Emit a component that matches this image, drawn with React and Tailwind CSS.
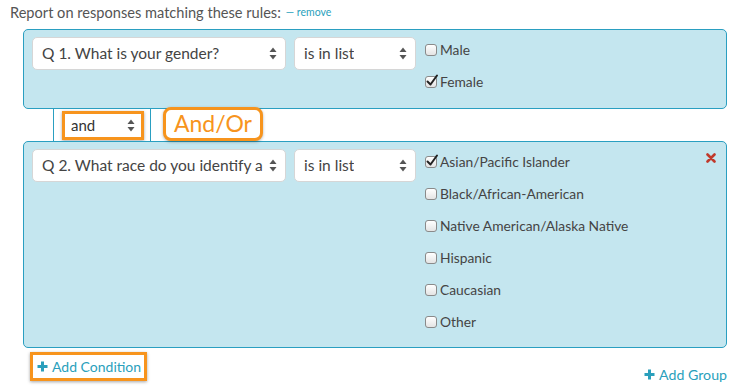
import React from "react";

const font = { fontFamily: '"Lato", "Open Sans", "Liberation Sans", sans-serif' };

function Arrows() {
  return (
    <svg width="8" height="13" viewBox="0 0 8 13" className="shrink-0">
      <path d="M4 0.5 L7.5 5 L0.5 5 Z" fill="#555" />
      <path d="M4 12.5 L7.5 8 L0.5 8 Z" fill="#555" />
    </svg>
  );
}

function Plus() {
  return (
    <svg width="11" height="11" viewBox="0 0 11 11" className="mr-[4px] shrink-0">
      <path d="M5.5 0.5 V10.5 M0.5 5.5 H10.5" stroke="#2a9fbc" strokeWidth="3" />
    </svg>
  );
}

function Select({ text, w, className = "" }) {
  return (
    <div
      className={`flex h-[33px] items-center justify-between rounded-[5px] border border-[#d6d6d6] bg-white pl-[9px] pr-[8px] text-[15.5px] text-[#444] ${className}`}
      style={{ width: w }}
    >
      <span className="mr-[6px] overflow-hidden whitespace-nowrap">{text}</span>
      <Arrows />
    </div>
  );
}

function Check({ checked, label }) {
  return (
    <div className="flex h-[32px] items-start">
      <div className="relative mt-[4px] h-[12px] w-[12px] shrink-0 rounded-[3px] border border-[#8a8a8a] bg-gradient-to-b from-white to-[#e4e4e4]">
        {checked && (
          <svg width="14" height="14" viewBox="0 0 14 14" className="absolute -left-[1px] -top-[3px]">
            <path d="M2.5 7.5 L5.5 10.5 L12 1.5" stroke="#222" strokeWidth="2" fill="none" strokeLinecap="round" strokeLinejoin="round" />
          </svg>
        )}
      </div>
      <span className="ml-[3px] text-[13.8px] leading-[20px] text-[#444]">{label}</span>
    </div>
  );
}

export default function App() {
  return (
    <div className="relative h-[391px] w-[737px] overflow-hidden bg-white" style={font}>
      <div className="flex h-[29px] items-center pl-[10px] pb-[3px]">
        <span className="text-[14.6px] text-[#555]">Report on responses matching these rules:</span>
        <span className="ml-[5px] text-[10.5px] text-[#2a9fbc]">— remove</span>
      </div>

      <div className="ml-[23px] w-[704px]">
        <div className="flex h-[80px] gap-[8px] rounded-[5px] border border-[#2a9fc1] bg-[#c4e6ef] pl-[8px] pt-[7px]">
          <Select text="Q 1. What is your gender?" w={254} />
          <Select text="is in list" w={122} />
          <div className="ml-[1px] flex flex-col pt-[3px]">
            <Check label="Male" />
            <Check checked label="Female" />
          </div>
        </div>

        <div className="flex h-[32px] items-center">
          <div className="ml-[30px] flex h-full w-[98px] items-center border-x border-[#2a9fc1] bg-white pl-[8px]">
            <div className="flex h-[29px] w-[82px] items-center justify-between border-[3px] border-[#f7941d] bg-white pl-[6px] pr-[6px] text-[15px] text-[#333] shadow-[0_1px_3px_rgba(0,0,0,0.35)]">
              <span>and</span>
              <Arrows />
            </div>
          </div>
          <div className="relative z-10 ml-[12px] -mt-[3px] flex h-[34px] w-[100px] items-center justify-center rounded-[8px] border-[3px] border-[#f7941d] bg-white text-[23px] text-[#f7941d] shadow-[0_1px_3px_rgba(0,0,0,0.3)]">
            And/Or
          </div>
        </div>

        <div className="relative flex h-[207px] gap-[8px] rounded-[5px] border border-[#2a9fc1] bg-[#c4e6ef] pl-[8px] pt-[7px]">
          <Select text="Q 2. What race do you identify as?" w={254} />
          <Select text="is in list" w={122} />
          <div className="ml-[1px] flex flex-col pt-[3px]">
            <Check checked label="Asian/Pacific Islander" />
            <Check label="Black/African-American" />
            <Check label="Native American/Alaska Native" />
            <Check label="Hispanic" />
            <Check label="Caucasian" />
            <Check label="Other" />
          </div>
          <svg width="10" height="10" viewBox="0 0 10 10" className="absolute right-[10px] top-[11px]">
            <path d="M1.5 1.5 L8.5 8.5 M8.5 1.5 L1.5 8.5" stroke="#c0392b" strokeWidth="2.6" strokeLinecap="round" />
          </svg>
        </div>

        <div className="flex items-start justify-between">
          <div className="ml-[7px] mt-[4px] flex h-[29px] w-[117px] items-center border-[3px] border-[#f7941d] bg-white pl-[4px] pb-[1px] text-[14px] text-[#2a9fbc] shadow-[0_1px_3px_rgba(0,0,0,0.35)]">
            <Plus />Add Condition
          </div>
          <div className="mt-[16px] flex items-center text-[14.2px] text-[#2a9fbc]">
            <Plus />Add Group
          </div>
        </div>
      </div>
    </div>
  );
}
